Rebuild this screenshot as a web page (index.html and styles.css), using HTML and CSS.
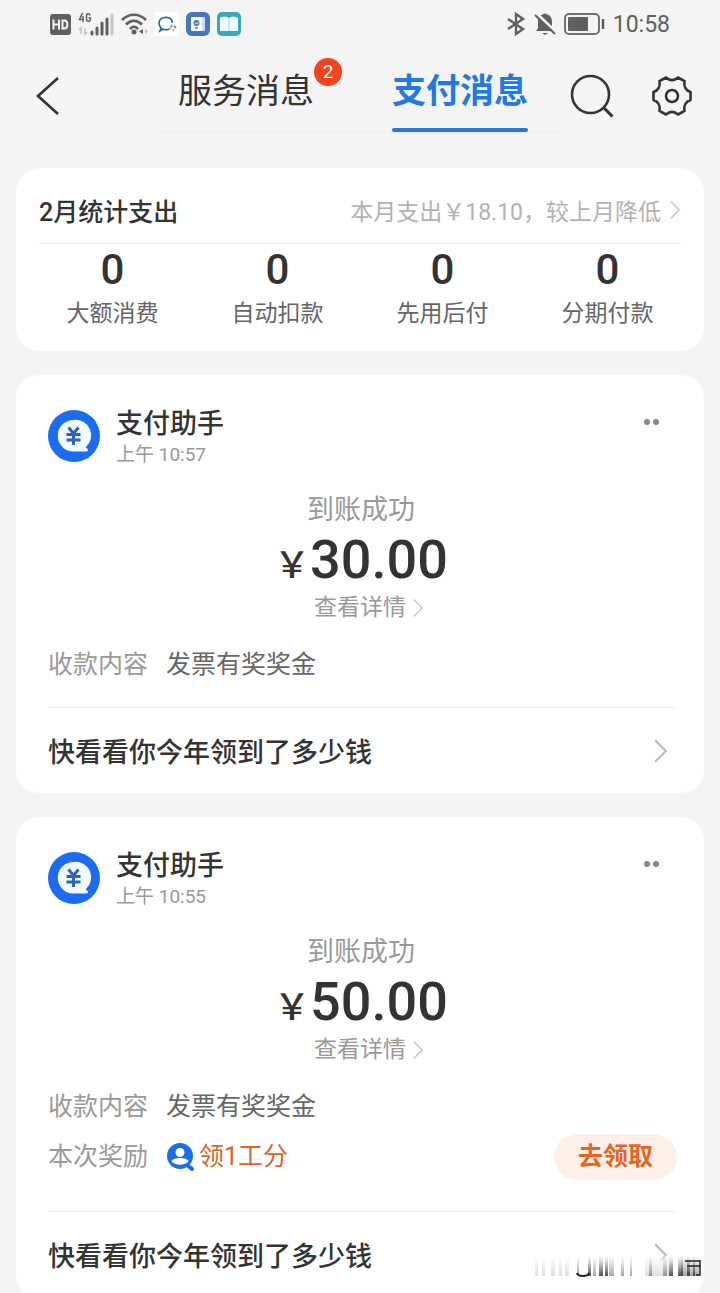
FILE: index.html
```html
<!DOCTYPE html>
<html lang="zh-CN">
<head>
<meta charset="utf-8">
<meta name="viewport" content="width=device-width, initial-scale=1">
<title>支付消息</title>
<link rel="stylesheet" href="styles.css">
</head>
<body>
<svg class="defs" aria-hidden="true">
  <symbol id="chevron" viewBox="0 0 14 24"><path d="M2 2l10 10L2 22" fill="none" stroke="currentColor" stroke-width="2"/></symbol>
  <symbol id="avatar" viewBox="0 0 52 52">
    <circle cx="26" cy="26" r="26" fill="#1b6cf2"/>
    <path d="M25.500 10a15.500 15.500 0 1 0 0 31.500H38c2 0 2.500-1.500 1.500-2.500l-1.800-1.800A15.500 15.500 0 0 0 25.500 10z" fill="#f0fbff"/>
    <path d="M20.500 17.500l5 6 5-6M18.500 24.500h14M18.500 30h14M25.500 24v11" fill="none" stroke="#2a62bd" stroke-width="3"/>
  </symbol>
</svg>
<div class="screen">
  <div class="status">
    <div class="status-group">
      <svg width="21" height="21" viewBox="0 0 21 21"><rect width="21" height="21" rx="3" fill="#606060"/><path d="M3.500 5.500v10M9 5.500v10M3.500 10.500H9M12.500 6.500v8H14c4.500 0 4.500-8 0-8z" fill="none" stroke="#f4f4f4" stroke-width="2"/></svg>
      <svg width="36" height="24" viewBox="0 0 36 24">
        <path d="M4.500 1L1.500 7.500H6M5 4v6M12 3.500C11.500 1 8.500 1 8.500 4v3c0 3 4 3 4 0V6H10.500" fill="none" stroke="#606060" stroke-width="1.500"/>
        <path d="M3 22v-6l-2 2M7 16v6l2-2" fill="none" stroke="#bdbdbd" stroke-width="1.500"/>
        <path d="M14 20v2M19 16v6M24 11v11M29 7v15" stroke="#606060" stroke-width="3" stroke-linecap="round"/>
        <path d="M34 3v19" stroke="#c4c4c4" stroke-width="3" stroke-linecap="round"/>
      </svg>
      <svg width="27" height="24" viewBox="0 0 27 24">
        <path d="M1 8c7-7 17-7 24 0M5 12.500c5-5 11-5 16 0M9 17c3-3 5-3 8 0" fill="none" stroke="#606060" stroke-width="2.600"/>
        <circle cx="13" cy="20" r="2.500" fill="#606060"/><path d="M22 17v5l-4-2.500z" fill="#606060"/><path d="M24 17v5l3-2.500z" fill="#bdbdbd"/>
      </svg>
      <svg width="24" height="24" viewBox="0 0 24 24"><rect width="24" height="24" fill="#fff"/><path d="M17.500 11C18 3.500 4 3.500 4 11c0 2 1 4 2 5l-1 3 3-2c2 1 4 1 6 0" fill="none" stroke="#286b92" stroke-width="1.700"/><path d="M16 13l1 2" stroke="#4aa5e5" stroke-width="2"/><path d="M19 14l2 2" stroke="#55a84c" stroke-width="2"/><path d="M14 17l2-1M18 19l1-2" stroke="#e2a52b" stroke-width="2"/></svg>
      <svg width="24" height="24" viewBox="0 0 24 24"><rect width="24" height="24" rx="6" fill="#4677bd"/><rect x="8" y="5" width="11" height="14" rx="1" fill="#c7ddf4"/><rect x="5" y="5" width="11" height="14" rx="1" fill="#fff"/><circle cx="10.500" cy="11" r="3" fill="#4677bd"/><path d="M9 16h3" stroke="#4677bd" stroke-width="1.500"/><path d="M9 10.500l1.500 1.500 2-2" fill="none" stroke="#fff"/></svg>
      <svg width="24" height="24" viewBox="0 0 24 24"><rect width="24" height="24" rx="5" fill="#38a9b8"/><path d="M3 6c4-2 7-1 9 0 2-1 5-2 9 0v13H3z" fill="#effdff"/><path d="M12 6v13" stroke="#a5d9df"/></svg>
    </div>
    <div class="status-group status-right">
      <svg width="20" height="24" viewBox="0 0 20 24"><path d="M2 7l15 10-7 5V2l7 5L2 17" fill="none" stroke="#606060" stroke-width="2.400"/></svg>
      <svg width="22" height="24" viewBox="0 0 22 24"><path d="M2 19h18l-2-3V10c0-4-2-7-5-7.500C12 1 10 1 9 2.500 6 3 4 6 4 10v6zM8 21h6l-3 2z" fill="#606060"/><path d="M2 1l20 19" stroke="#f4f4f4" stroke-width="3"/><path d="M1 3l20 19" stroke="#606060" stroke-width="2.200"/></svg>
      <svg width="41" height="22" viewBox="0 0 41 22"><rect x="1" y="1" width="34" height="20" rx="4" fill="none" stroke="#707070" stroke-width="2"/><rect x="4" y="4" width="20" height="14" rx="1" fill="#606060"/><path d="M39 6v10" stroke="#606060" stroke-width="2.500"/></svg>
      <time>10:58</time>
    </div>
  </div>

  <header class="header">
    <button class="icon-button back" aria-label="返回"><svg width="24" height="38" viewBox="0 0 24 38"><path d="M22 1L2 19l20 18" fill="none" stroke="currentColor" stroke-width="2.600"/></svg></button>
    <nav class="tabs">
      <button class="tab">服务消息<span class="badge">2</span></button>
      <button class="tab tab-active" aria-current="page">支付消息</button>
    </nav>
    <div class="tools">
      <button class="icon-button" aria-label="搜索"><svg width="44" height="44" viewBox="0 0 44 44"><circle cx="20.500" cy="20.500" r="18.500" fill="none" stroke="currentColor" stroke-width="2.600"/><path d="M33.500 33.500l9 9" stroke="currentColor" stroke-width="3"/></svg></button>
      <button class="icon-button" aria-label="设置"><svg width="40" height="42" viewBox="0 0 40 42"><path d="M14 2.500L7.500 6.200C8.500 11.500 6 15.500 1.500 17v8C6 26.500 8.500 30.500 7.500 35.800L14 39.500c4-3.600 8-3.600 12 0l6.500-3.700C31.500 30.500 34 26.500 38.500 25v-8C34 15.500 31.500 11.500 32.500 6.200L26 2.500c-4 3.600-8 3.600-12 0z" fill="none" stroke="currentColor" stroke-width="2.600" stroke-linejoin="round"/><circle cx="20" cy="21" r="6" fill="none" stroke="currentColor" stroke-width="2.600"/></svg></button>
    </div>
  </header>

  <main class="feed">
    <section class="card summary">
      <div class="summary-head">
        <h2>2月统计支出</h2>
        <a class="summary-link" href="#">本月支出￥18.10，较上月降低<svg class="chevron-small"><use href="#chevron"/></svg></a>
      </div>
      <ul class="stats">
        <li><strong>0</strong><span>大额消费</span></li>
        <li><strong>0</strong><span>自动扣款</span></li>
        <li><strong>0</strong><span>先用后付</span></li>
        <li><strong>0</strong><span>分期付款</span></li>
      </ul>
    </section>

    <article class="card message">
      <div class="sender">
        <svg class="avatar"><use href="#avatar"/></svg>
        <div class="sender-text"><h3>支付助手</h3><time>上午 10:57</time></div>
        <button class="more" aria-label="更多"><i></i><i></i></button>
      </div>
      <div class="receipt">
        <p>到账成功</p>
        <p class="amount"><span class="yen">￥</span>30.00</p>
        <a href="#">查看详情<svg class="chevron-small"><use href="#chevron"/></svg></a>
      </div>
      <dl class="details">
        <div><dt>收款内容</dt><dd>发票有奖奖金</dd></div>
      </dl>
      <a class="promo" href="#">快看看你今年领到了多少钱<svg class="chevron"><use href="#chevron"/></svg></a>
    </article>

    <article class="card message">
      <div class="sender">
        <svg class="avatar"><use href="#avatar"/></svg>
        <div class="sender-text"><h3>支付助手</h3><time>上午 10:55</time></div>
        <button class="more" aria-label="更多"><i></i><i></i></button>
      </div>
      <div class="receipt">
        <p>到账成功</p>
        <p class="amount"><span class="yen">￥</span>50.00</p>
        <a href="#">查看详情<svg class="chevron-small"><use href="#chevron"/></svg></a>
      </div>
      <dl class="details">
        <div><dt>收款内容</dt><dd>发票有奖奖金</dd></div>
        <div class="reward"><dt>本次奖励</dt><dd><svg width="30" height="30" viewBox="0 0 30 30"><path d="M21 23l5 4" stroke="#1b6fe4" stroke-width="4" stroke-linecap="round"/><circle cx="14" cy="14" r="13" fill="#1b6fe4"/><circle cx="14" cy="10.500" r="4.500" fill="#fff"/><path d="M5.500 19c2-4 15-4 17 0-3 5-14 5-17 0z" fill="#fff"/></svg>领1工分</dd><dd class="claim-cell"><button class="claim">去领取</button></dd></div>
      </dl>
      <a class="promo" href="#">快看看你今年领到了多少钱<svg class="chevron"><use href="#chevron"/></svg></a>
    </article>
  </main>

  <svg class="smudge" viewBox="0 0 178 26" aria-hidden="true">
    <defs>
      <linearGradient id="fade" x1="0" y1="0" x2="0" y2="1"><stop offset="0" stop-color="#555" stop-opacity="0"/><stop offset="1" stop-color="#222"/></linearGradient>
      <linearGradient id="veil" x1="0" y1="0" x2="0" y2="1"><stop offset="0" stop-color="#fff" stop-opacity="0"/><stop offset=".3" stop-color="#fff"/></linearGradient>
    </defs>
    <rect x="100" width="76" height="26" fill="url(#veil)"/>
    <g fill="url(#fade)">
      <g opacity=".14"><path d="M8 2h3v20H8zM15 2h3v20h-3zM24 2h4v20h-4zM32 2h3v20h-3zM38 2h4v20h-4z"/><rect x="118" y="2" width="24" height="20"/></g>
      <g opacity=".4"><rect x="50" y="2" width="2" height="18"/><rect x="66" y="2" width="3" height="20"/><rect x="82" y="2" width="5" height="20"/><rect x="94" y="2" width="3" height="20"/><rect x="103" y="2" width="2" height="20"/><rect x="122" y="2" width="3" height="20"/><rect x="136" y="2" width="4" height="20"/><rect x="154" y="2" width="18" height="20"/></g>
      <g opacity=".8"><rect x="61" y="2" width="3" height="20"/><rect x="72" y="2" width="4" height="20"/><rect x="78" y="2" width="3" height="20"/><rect x="142" y="2" width="4" height="20"/><rect x="151" y="2" width="5" height="20"/><rect x="160" y="2" width="3" height="20"/><rect x="166" y="2" width="2" height="20"/></g>
    </g>
    <path d="M50 19c1 4 11 4 12 0" fill="none" stroke="#222" stroke-width="2"/>
    <path d="M158 7h15M160 12h13M173 6v15h-4" fill="none" stroke="#222" stroke-width="1.500"/>
  </svg>
</div>
</body>
</html>
```

FILE: styles.css
```css
* { box-sizing: border-box; }

body {
  margin: 0;
  background: #f4f4f4;
  color: #333;
  font-family: Roboto, "Noto Sans CJK SC", sans-serif;
}

h2, h3, p, ul, dl, dd { margin: 0; padding: 0; }
ul { list-style: none; }
a { color: inherit; text-decoration: none; }
svg { flex: none; }

button {
  border: 0;
  padding: 0;
  background: none;
  color: inherit;
  font: inherit;
  cursor: pointer;
}

.defs { position: absolute; width: 0; height: 0; }

.screen {
  position: relative;
  display: flex;
  flex-direction: column;
  height: 100vh;
  overflow: hidden;
}

.status {
  display: flex;
  flex: none;
  justify-content: space-between;
  align-items: center;
  height: 48px;
  padding: 0 50px;
  color: #606060;
}

.status-group { display: flex; align-items: center; gap: 7px; }
.status-right { gap: 8px; font-size: 23px; }

.header {
  display: grid;
  flex: none;
  grid-template-columns: 160px 1fr 160px;
  align-items: center;
  height: 96px;
}

.icon-button { display: flex; }
.back { padding-left: 36px; }

.tabs {
  display: flex;
  align-self: start;
  justify-content: space-between;
  height: 85px;
  padding: 0 32px 0 18px;
  border-bottom: 1px solid #ececec;
}

.tab {
  position: relative;
  height: 84px;
  font-size: 34px;
}

.tab-active { color: #217ae3; font-weight: 700; }

.tab-active::after {
  content: "";
  position: absolute;
  right: 0;
  bottom: 0;
  left: 0;
  height: 4px;
  border-radius: 2px;
  background: #2f74d0;
}

.tab { padding-bottom: 3px; }

.badge {
  position: absolute;
  top: 10px;
  right: -28px;
  width: 28px;
  height: 28px;
  border-radius: 50%;
  background: #f4431f;
  color: #fff;
  font-size: 19px;
  line-height: 28px;
}

.tools {
  display: flex;
  align-items: center;
  justify-content: space-between;
  padding: 0 28px 0 10px;
}

.feed {
  display: flex;
  flex: 1;
  flex-direction: column;
  gap: 24px;
  min-height: 0;
  overflow-y: auto;
  padding: 24px 16px 0;
  scrollbar-width: none;
}

.card { flex: none; border-radius: 24px; background: #fff; }

.summary { padding: 12px 23px 19px; }

.summary-head {
  display: flex;
  align-items: center;
  justify-content: space-between;
  height: 64px;
  padding-bottom: 3px;
  border-bottom: 1px solid #e8e8e8;
}

.summary-head h2 { font-size: 25px; font-weight: 500; }

.summary-link {
  display: flex;
  align-items: center;
  gap: 8px;
  color: #b2b2b2;
  font-size: 23px;
}

.chevron-small { width: 12px; height: 20px; color: #ccc; }
.chevron { width: 15px; height: 26px; margin-right: 6px; color: #bbb; }

.stats {
  display: grid;
  grid-template-columns: repeat(4, 1fr);
  margin: 0 -9px;
  text-align: center;
}

.stats strong {
  display: block;
  font-size: 42px;
  font-weight: 500;
  line-height: 52px;
}

.stats span { display: block; color: #666; font-size: 23px; line-height: 36px; }

.message { padding: 25px 30px 0 32px; }

.sender { display: flex; align-items: center; gap: 16px; height: 72px; }
.sender-text { padding-top: 2px; }
.avatar { width: 52px; height: 52px; }
.sender h3 { font-size: 27px; font-weight: 500; line-height: 36px; }
.sender time { display: block; color: #999; font-size: 19px; line-height: 26px; }

.more {
  display: flex;
  align-self: start;
  gap: 3px;
  margin-left: auto;
  padding: 19px 15px 12px;
}

.more i { width: 6px; height: 6px; border-radius: 50%; background: #888; }

.receipt {
  display: flex;
  flex-direction: column;
  align-items: center;
  padding-top: 20px;
  color: #999;
  font-size: 27px;
  line-height: 36px;
}

.amount {
  display: flex;
  align-items: baseline;
  height: 64px;
  color: #333;
  font-size: 54px;
  font-weight: 500;
  line-height: 64px;
}

.yen { font-size: 36px; line-height: 36px; }

.receipt a {
  display: flex;
  align-items: center;
  gap: 6px;
  margin-left: 16px;
  font-size: 23px;
  line-height: 32px;
}

.details { padding: 22px 0 23px; font-size: 25px; line-height: 38px; }
.details > div { display: flex; align-items: center; gap: 18px; }
.details dt { color: #999; }
.details dd { color: #666; }
.details .reward { margin: 8px -3px 8px 0; }
.reward dd { display: flex; align-items: center; gap: 3px; color: #d9662a; }
.reward .claim-cell { margin-left: auto; }

.claim {
  width: 123px;
  height: 46px;
  border-radius: 23px;
  background: #ffefe9;
  color: #e2661f;
  font-weight: 700;
}

.promo {
  display: flex;
  align-items: center;
  justify-content: space-between;
  height: 86px;
  border-top: 1px solid #e8e8e8;
  font-size: 27px;
  font-weight: 500;
}

.smudge {
  position: absolute;
  right: 15px;
  bottom: 13px;
  width: 178px;
  height: 26px;
}
```
